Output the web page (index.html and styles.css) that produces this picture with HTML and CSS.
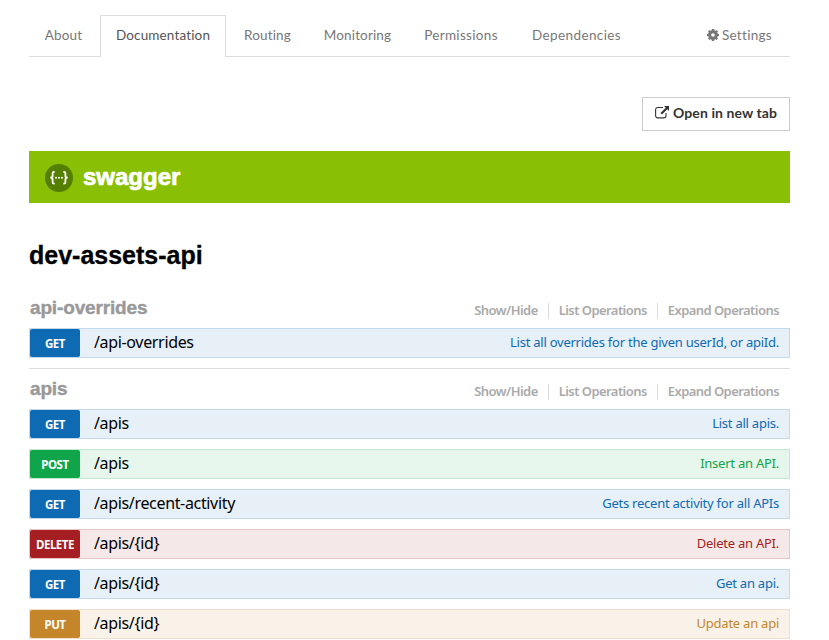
FILE: index.html
```html
<!DOCTYPE html>
<html lang="en">
<head>
<meta charset="utf-8">
<title>dev-assets-api</title>
<link rel="stylesheet" href="styles.css">
</head>
<body>
<nav class="tabs">
  <a class="tab about">About</a>
  <a class="tab documentation active">Documentation</a>
  <a class="tab routing">Routing</a>
  <a class="tab monitoring">Monitoring</a>
  <a class="tab permissions">Permissions</a>
  <a class="tab dependencies">Dependencies</a>
  <a class="tab settings"><svg class="gear" viewBox="0 0 12 12"><g fill="currentColor"><path fill-rule="evenodd" d="M6 1.200a4.800 4.800 0 1 0 0 9.600 4.800 4.800 0 0 0 0-9.600zM6 4.200a1.800 1.800 0 1 1 0 3.600 1.800 1.800 0 0 1 0-3.600z"/><path d="M4.900 0h2.200l.4 2H4.500zM4.900 12h2.200l.4-2H4.500zM0 4.900v2.200l2 .4V4.500zM12 4.900v2.200l-2 .4V4.500zM1 2.500L2.500 1l1.700 1.200-2 2zM9.500 1L11 2.500 9.800 4.200l-2-2zM11 9.500L9.500 11l-1.700-1.200 2-2zM2.500 11L1 9.500l1.200-1.700 2 2z"/></g></svg><span>Settings</span></a>
</nav>
<div class="toolbar">
  <button class="open"><svg class="external" viewBox="0 0 14 13"><path d="M8 1.500H2.800A2.200 2.200 0 0 0 .6 3.700v6a2.200 2.200 0 0 0 2.200 2.200h6A2.200 2.200 0 0 0 11 9.700V7" fill="none" stroke="currentColor" stroke-width="1.100"/><path d="M9 0h5v5l-1.700-1.700L7 8.600 5.500 7.100l5.300-5.300z" fill="currentColor"/></svg><span>Open in new tab</span></button>
</div>
<header class="banner">
  <svg class="logo" viewBox="0 0 28 28"><circle cx="14" cy="14" r="14" fill="#547f00"/><g fill="none" stroke="#fff" stroke-width="1.800"><path d="M9.700 7.800H9Q7.600 7.800 7.600 9.300V12Q7.600 13.700 5.300 13.700Q7.600 13.700 7.600 15.500V18.200Q7.600 19.700 9 19.700H9.700M18.300 7.800H19Q20.400 7.800 20.400 9.300V12Q20.400 13.700 22.700 13.700Q20.400 13.700 20.400 15.500V18.200Q20.400 19.700 19 19.700H18.300"/></g><g fill="#fff"><circle cx="11" cy="13.800" r="1"/><circle cx="14" cy="13.800" r="1"/><circle cx="17" cy="13.800" r="1"/></g></svg>
  <span class="brand">swagger</span>
</header>
<main>
  <h1>dev-assets-api</h1>
  <section class="resource">
    <div class="heading"><h2>api-overrides</h2><div class="options"><a class="toggle">Show/Hide</a><a class="list">List Operations</a><a class="expand">Expand Operations</a></div></div>
    <div class="op get"><span class="method">GET</span><span class="path">/api-overrides</span><span class="summary">List all overrides for the given userId, or apiId.</span></div>
  </section>
  <section class="resource">
    <div class="heading"><h2>apis</h2><div class="options"><a class="toggle">Show/Hide</a><a class="list">List Operations</a><a class="expand">Expand Operations</a></div></div>
    <div class="op get"><span class="method">GET</span><span class="path">/apis</span><span class="summary">List all apis.</span></div>
    <div class="op post"><span class="method">POST</span><span class="path">/apis</span><span class="summary">Insert an API.</span></div>
    <div class="op get"><span class="method">GET</span><span class="path">/apis/recent-activity</span><span class="summary">Gets recent activity for all APIs</span></div>
    <div class="op delete"><span class="method">DELETE</span><span class="path">/apis/{id}</span><span class="summary">Delete an API.</span></div>
    <div class="op get"><span class="method">GET</span><span class="path">/apis/{id}</span><span class="summary">Get an api.</span></div>
    <div class="op put"><span class="method">PUT</span><span class="path">/apis/{id}</span><span class="summary">Update an api</span></div>
  </section>
</main>
</body>
</html>
```
FILE: styles.css
```css
* { box-sizing: border-box; }
html { overflow: hidden; }
body { margin: 0; padding: 15px 39px 0 29px; background: #fff; font-family: "Noto Sans", sans-serif; }
.tabs { display: flex; height: 42px; border-bottom: 1px solid #ddd; font: 13.5px/40px Lato, sans-serif; color: #777; }
.tab { display: flex; justify-content: center; white-space: nowrap; height: 42px; letter-spacing: .15px; }
.about { width: 69px; margin-right: 2px; }
.documentation { width: 126px; margin-right: 2px; }
.routing { width: 79px; margin-right: 2px; }
.monitoring { width: 97px; margin-right: 2px; }
.permissions { width: 106px; margin-right: 2px; letter-spacing: .32px; }
.dependencies { width: 121px; letter-spacing: .4px; }
.tab.active { color: #555; background: #fff; border: 1px solid #ddd; border-bottom: 0; line-height: 38px; }
.settings { margin-left: auto; margin-right: 18px; gap: 3px; letter-spacing: .3px; }
.gear { width: 12px; height: 12px; margin-top: 14px; }
.toolbar { display: flex; justify-content: flex-end; margin-top: 40px; }
.open { display: flex; align-items: center; justify-content: center; gap: 4px; width: 148px; height: 34px; padding: 0 0 3px; border: 1px solid #ccc; background: #fff; color: #333; font: bold 14px Lato, sans-serif; letter-spacing: .08px; white-space: nowrap; }
.external { flex: none; width: 14px; height: 13px; margin-top: -1px; }
.banner { display: flex; align-items: center; height: 52px; margin-top: 20px; padding-left: 16px; background: #89bf04; }
.logo { width: 28px; height: 28px; margin-top: 1px; }
.brand { margin-left: 10px; color: #fff; font: bold 24px "Liberation Sans", sans-serif; -webkit-text-stroke: .7px #fff; }
h1, h2 { margin: 0; font-family: "Liberation Sans", sans-serif; font-weight: bold; white-space: nowrap; }
h1 { margin-top: 36px; height: 55px; font-size: 25px; line-height: 32px; color: #000; -webkit-text-stroke: .3px #000; }
.resource { height: 75px; border-bottom: 1px solid #ddd; }
.resource + .resource { height: auto; margin-top: 6px; border: 0; }
.heading { display: flex; justify-content: space-between; height: 34px; padding-left: 1px; }
h2 { color: #999; font-size: 19px; line-height: 27px; letter-spacing: -.15px; -webkit-text-stroke: .4px #999; }
.options { display: flex; margin: 9px 11px 0 0; height: 16px; color: #aaa; font-size: 13px; font-weight: 600; line-height: 15px; letter-spacing: -.56px; }
.options a { white-space: nowrap; }
.options a + a { border-left: 1px solid #ddd; margin-left: 10px; padding-left: 10px; }
.op { display: flex; align-items: center; height: 30px; margin-bottom: 10px; padding-right: 10px; border: 1px solid; white-space: nowrap; }
.method { width: 50px; height: 28px; border-radius: 2px; color: #fff; text-align: center; font-size: 11.5px; font-weight: bold; line-height: 29px; letter-spacing: -.45px; }
.path { margin-left: 14px; color: #000; font-size: 16px; line-height: 26px; margin-top: -2px; letter-spacing: -.34px; }
.summary { margin-left: auto; font-size: 13px; line-height: 26px; margin-top: -3px; letter-spacing: -.24px; }
.get { background: #e7f0f7; border-color: #c3d9ec; color: #0f6ab4; }
.get .method { background: #0f6ab4; }
.post { background: #e7f6ec; border-color: #c3e8d1; color: #10a54a; }
.post .method { background: #10a54a; }
.delete { background: #f5e8e8; border-color: #e8c6c7; color: #a41e22; }
.delete .method { background: #a41e22; }
.put { background: #f9f2e9; border-color: #f0e0ca; color: #c5862b; }
.put .method { background: #c5862b; }
```
